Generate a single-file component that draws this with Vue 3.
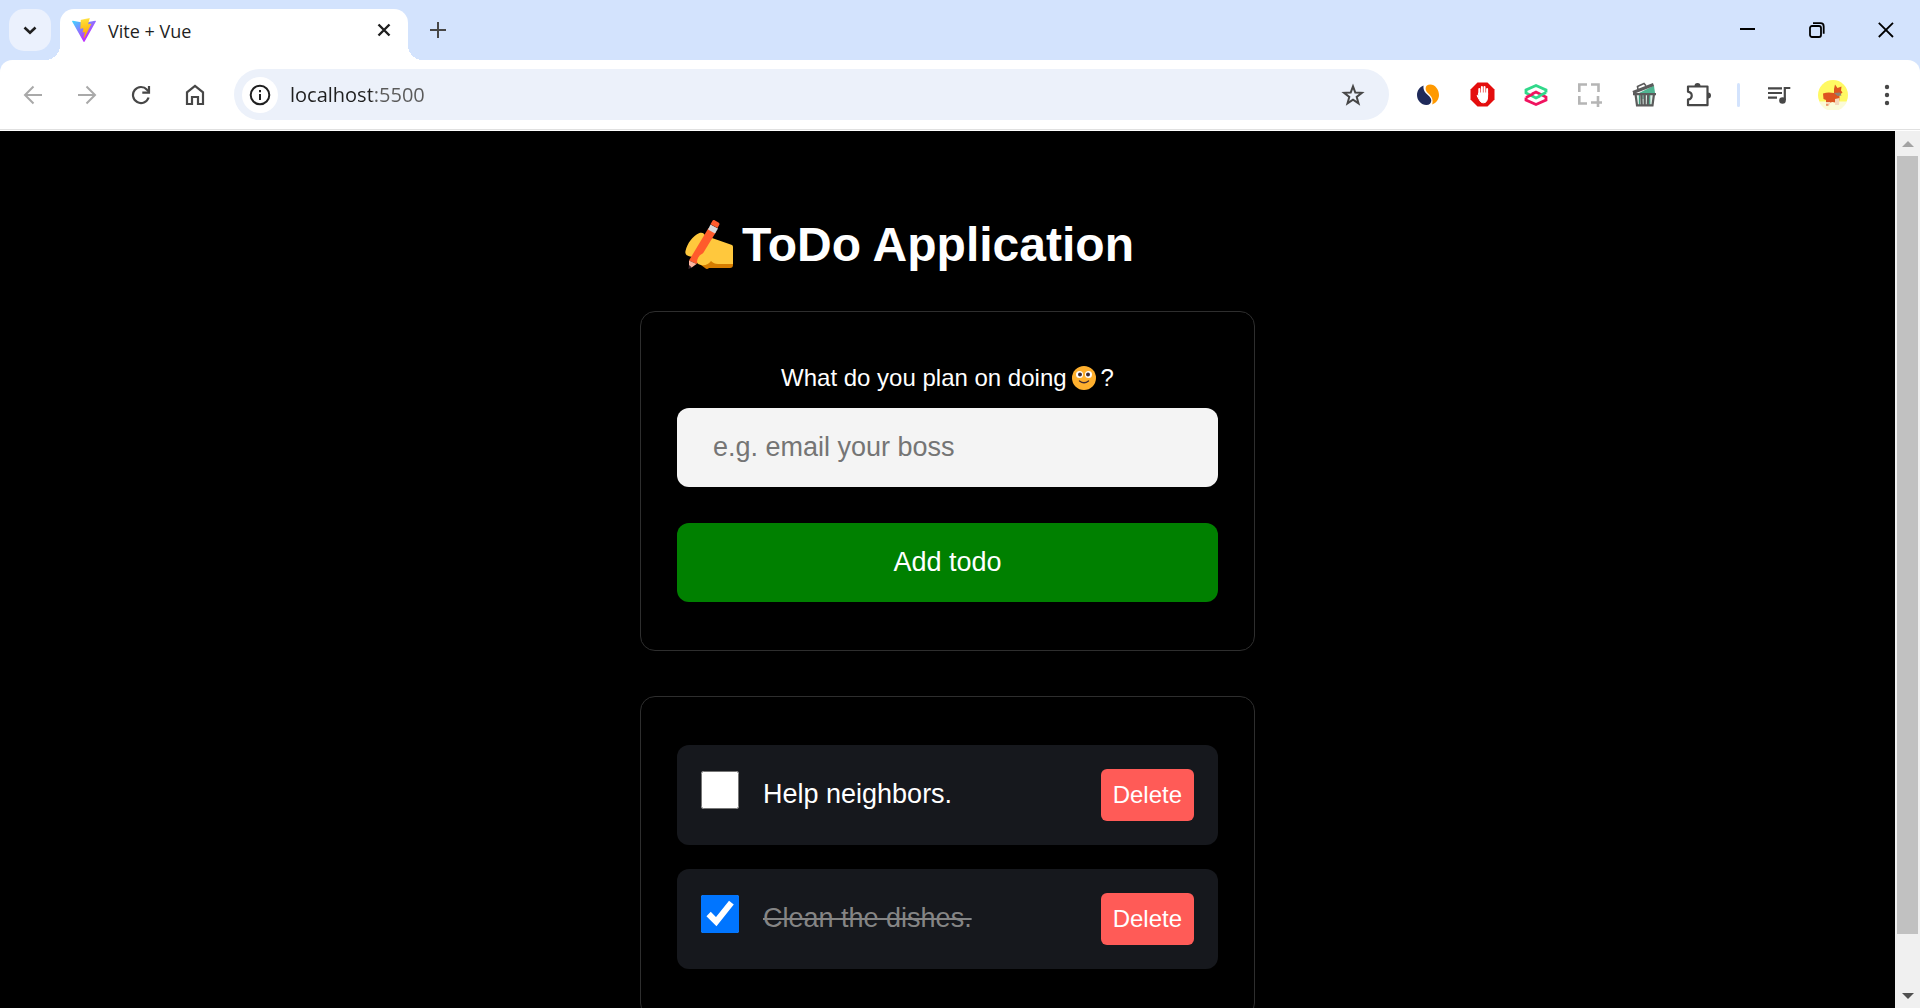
<script setup>
import { ref } from 'vue'

const address = ref('localhost:5500')
const newTodo = ref('')
const todos = ref([
  { id: 1, content: 'Help neighbors.', done: false },
  { id: 2, content: 'Clean the dishes.', done: true },
])

function addTodo() {
  if (!newTodo.value.trim()) return
  todos.value.push({ id: Date.now(), content: newTodo.value, done: false })
  newTodo.value = ''
}

function removeTodo(id) {
  todos.value = todos.value.filter((t) => t.id !== id)
}
</script>

<template>
  <div class="window">
    <header class="tabstrip">
      <button class="tab-search" aria-label="Search tabs">
        <svg width="14" height="14" viewBox="0 0 14 14" fill="none" stroke="#1f1f1f" stroke-width="2.6"><path d="M1.5 4.5 7 9.7l5.500-5.200" /></svg>
      </button>
      <div class="tab">
        <svg width="24" height="24" viewBox="0 0 256 257">
          <defs>
            <linearGradient id="vite-a" x1="-.8%" x2="57.6%" y1="7.7%" y2="78.4%">
              <stop offset="0" stop-color="#41d1ff" />
              <stop offset="1" stop-color="#bd34fe" />
            </linearGradient>
            <linearGradient id="vite-b" x1="43.4%" x2="50.3%" y1="2.2%" y2="89%">
              <stop offset="0" stop-color="#ffea83" />
              <stop offset=".083" stop-color="#ffdd35" />
              <stop offset="1" stop-color="#ffa800" />
            </linearGradient>
          </defs>
          <path fill="url(#vite-a)" d="M255.153 37.938L134.897 252.976c-2.483 4.44-8.862 4.466-11.382.048L.875 37.958c-2.746-4.814 1.371-10.646 6.827-9.67l120.385 21.517a6.537 6.537 0 0 0 2.322-.004l117.867-21.483c5.438-.991 9.574 4.796 6.877 9.62Z" />
          <path fill="url(#vite-b)" d="M185.432.063L96.44 17.501a3.268 3.268 0 0 0-2.634 3.014l-5.474 92.456a3.268 3.268 0 0 0 3.997 3.378l24.777-5.718c2.318-.535 4.413 1.507 3.936 3.838l-7.361 36.047c-.495 2.426 1.782 4.5 4.151 3.78l15.304-4.649c2.372-.72 4.652 1.36 4.15 3.788l-11.698 56.621c-.732 3.542 3.979 5.473 5.943 2.437l1.313-2.028l72.516-144.72c1.215-2.423-.88-5.186-3.54-4.672l-25.505 4.922c-2.396.462-4.435-1.77-3.759-4.114l16.646-57.705c.677-2.35-1.37-4.583-3.769-4.113Z" />
        </svg>
        <span class="tab-title">Vite + Vue</span>
        <button class="tab-close" aria-label="Close tab">
          <svg width="14" height="14" viewBox="0 0 14 14" stroke="#1f1f1f" stroke-width="2.4"><path d="M1.5 1.5l11 11M12.5 1.5l-11 11" /></svg>
        </button>
      </div>
      <button class="new-tab" aria-label="New tab">
        <svg width="16" height="16" viewBox="0 0 16 16" stroke="#474747" stroke-width="2"><path d="M8 0v16M0 8h16" /></svg>
      </button>
      <div class="window-controls">
        <button aria-label="Minimize">
          <svg width="16" height="16" viewBox="0 0 16 16" stroke="#000" stroke-width="2"><path d="M0 7h15" /></svg>
        </button>
        <button aria-label="Restore">
          <svg width="16" height="16" viewBox="0 0 16 16" fill="none" stroke="#000" stroke-width="1.8"><rect x="1" y="4" width="11" height="11" rx="2" /><path d="M4 1.2h7.5a3.2 3.2 0 0 1 3.2 3.2v7.4" /></svg>
        </button>
        <button aria-label="Close window">
          <svg width="16" height="16" viewBox="0 0 16 16" stroke="#000" stroke-width="1.8"><path d="M.8 .8l14.2 14.2M15 .8.8 15" /></svg>
        </button>
      </div>
    </header>

    <nav class="toolbar">
      <button class="tool" aria-label="Back">
        <svg width="20" height="20" viewBox="0 0 20 20" fill="none" stroke="#a9a9a9" stroke-width="2"><path d="M19 10H2.500M10.500 1.500 2 10l8.500 8.500" /></svg>
      </button>
      <button class="tool" aria-label="Forward">
        <svg width="20" height="20" viewBox="0 0 20 20" fill="none" stroke="#a9a9a9" stroke-width="2"><path d="M1 10h16.500M9.500 1.500 18 10l-8.500 8.500" /></svg>
      </button>
      <button class="tool" aria-label="Reload">
        <svg width="20" height="20" viewBox="0 0 20 20" fill="none" stroke="#474747" stroke-width="2.200"><path d="M17.600 12.500A8 8 0 1 1 16 4.700l1.800 1.900" /><path d="M18 1v6.700h-6.700" /></svg>
      </button>
      <button class="tool" aria-label="Home">
        <svg width="20" height="22" viewBox="0 0 20 22" fill="none" stroke="#474747" stroke-width="2.200"><path d="M2 20V8.300L10 2l8 6.300V20h-5v-7H7v7Z" /></svg>
      </button>

      <div class="omnibox">
        <button class="site-info" aria-label="View site information">
          <svg width="22" height="22" viewBox="0 0 22 22" fill="none" stroke="#1f1f1f" stroke-width="2"><circle cx="11" cy="11" r="9.300" /><path d="M11 10v6M11 6v2.200" /></svg>
        </button>
        <input v-model="address" class="address" type="text" aria-label="Address" />
        <button class="tool" aria-label="Bookmark this tab">
          <svg width="24" height="24" viewBox="0 0 24 24" fill="none" stroke="#474747" stroke-width="2"><path d="m12 3.300 2.300 6.200 6.600.3-5.200 4.100 1.800 6.400-5.500-3.700-5.500 3.700 1.800-6.400L3.100 9.800l6.600-.3Z" /></svg>
        </button>
      </div>

      <div class="extensions">
        <button class="tool" aria-label="Similarweb">
          <svg width="24" height="24" viewBox="0 0 24 24"><path fill="#1f2a5a" d="M7.500 2.500C3.600 4 1 7.700 1 12c0 5.500 4.400 10 9.300 10 3.300 0 5-2 5-4.500 0-2.200-1.400-3.700-3.500-5.600C9.300 9.700 7 7.300 7.500 2.500Z" /><path fill="#f90" d="M16.200 21.500C20.300 20 23 16.200 23 12c0-5.600-4-10.500-8.700-10.500C11.500 1.500 9.600 3 9.600 5.500c0 2.200 1.300 3.700 3.300 5.600 2.600 2.500 4.600 5.300 3.300 10.400Z" /></svg>
        </button>
        <button class="tool" aria-label="AdBlock">
          <svg width="25" height="25" viewBox="0 0 25 25"><path fill="#e40d0d" d="M7.500.5h10l7 7v10l-7 7h-10l-7-7v-10Z" /><g stroke="#fff" stroke-width="2" stroke-linecap="round" fill="#fff"><path d="M9.300 12V7M11.900 12V5M14.500 12V5M17.100 13V7" /><path stroke-width="1" d="M8.800 11h8.800v4c0 3.500-1.500 5.800-4 5.800-2.300 0-3.700-1.300-4.400-3.300L7 13.600c.7-.6 1.300-.3 1.800.8Z" /></g></svg>
        </button>
        <button class="tool" aria-label="Requestly">
          <svg width="24" height="24" viewBox="0 0 24 24" fill="none" stroke-width="2.800"><path stroke="#31d88a" d="M22 9.500V7L12 2.500 2 7v3l10 5 4-2" /><path stroke="#f0135f" d="M2 14.500V17l10 4.500L22 17v-3L12 9l-4 2" /><path stroke="#31d88a" d="m22 9.500-7 3.500" /><path stroke="#f0135f" d="m2 14.500 7-3.500" /></svg>
        </button>
        <button class="tool" aria-label="Capture area">
          <svg width="24" height="24" viewBox="0 0 24 24" fill="none" stroke="#b5b5b5" stroke-width="2.600"><path d="M1.300 9V1.500H9M13 1.500h7.500V9M1.300 13v7.500H9M20 13v11M13 19.500h11" /></svg>
        </button>
        <button class="tool" aria-label="Clear cache">
          <svg width="25" height="25" viewBox="0 0 25 25"><path fill="#4fb592" d="M7 11 22 3.500 23 11Z" /><path fill="#dff0e9" d="M4 12h18l-1.500 12h-15Z" /><path fill="none" stroke="#3e9e7e" stroke-width="1.200" d="M7.500 13v10M17.700 13v10M11 13v4" /><path fill="none" stroke="#5b5b5b" stroke-width="3.200" d="M1 10.500 21.500 2.500" /><path fill="none" stroke="#5b5b5b" stroke-width="1.600" d="M6 7.500 5.500 4.500 12 1.500l2 2.200" /><path fill="none" stroke="#5b5b5b" stroke-width="2.200" d="M1 12.200h23M3.500 12 5 23.300h15.500L22 12M9.300 12l.4 11M16.200 12l-.4 11M12.700 12v11" /></svg>
        </button>
        <button class="tool" aria-label="Extensions">
          <svg width="26" height="26" viewBox="0 0 26 26"><path fill="none" stroke="#474747" stroke-width="2.200" stroke-linejoin="round" d="M3 4.500h19.500v18.700H3v-5.500c5-1 5-7 0-8Z" /><path fill="#474747" d="M9.500 4a3 3 0 0 1 6 0ZM23 10.500a3 3 0 0 1 0 6Z" /></svg>
        </button>
      </div>
      <div class="divider"></div>
      <button class="tool" aria-label="Media controls">
        <svg width="24" height="20" viewBox="0 0 24 20" fill="none" stroke="#474747" stroke-width="2.200"><path d="M1 3.300h14M1 8h14M1 12.700h9M17.800 15V3h5.500" /><circle cx="15.500" cy="15.500" r="3.300" fill="#474747" stroke="none" /></svg>
      </button>
      <button class="tool" aria-label="Profile">
        <svg width="30" height="30" viewBox="0 0 30 30"><circle cx="15" cy="15" r="15" fill="#fff963" /><path fill="#fbfbd8" d="M1 21.500h28a15 15 0 0 1-28 0Z" /><path fill="#dd5420" d="M5 13.500c4-1.500 8-1 11-.5V9l1-4.500 2.500 3.500 4-1.500-.5 4 1.500 2-3 2.500v5l-2 3-5-1-4 1v2.500H8V20l-2.500-1Z" /><path fill="#f4d8bb" d="m17 19 4.500-1-.5 7h-4ZM8 22h4v2.500H8Z" /><path fill="#8d8176" d="m16 13 6-.500 1.500 3-4 .5Z" /></svg>
      </button>
      <button class="tool" aria-label="Menu">
        <svg width="6" height="22" viewBox="0 0 6 22" fill="#474747"><circle cx="3" cy="3" r="2.200" /><circle cx="3" cy="11" r="2.200" /><circle cx="3" cy="19" r="2.200" /></svg>
      </button>
    </nav>

    <div class="viewport">
      <main class="page">
        <div class="content">
          <h1>
            <svg class="hand" width="50" height="50" viewBox="0 0 50 50">
              <path fill="#d67c00" d="M13 34h36v11q0 3-3 3H25q-2 2-4 0l-4-3Z" />
              <path fill="#ffc83d" d="M1.500 31c2-8 7-15 14-18 4-1 7 2 5 6l-7 13c-2 4-5 6-9 4-3-1-3.500-3-3-5Z" />
              <path fill="#ffc83d" d="M28 18 48 25q1 .5 1 2v17H34c-3 0-5-1-7-3-3 4-7 5-10 4-5-1-7-5-4-9Z" />
              <path fill="#ff5b2b" d="m24.500 8 7.500 4L12.500 44 5 40.500Z" />
              <path fill="#d9d9d9" d="m26.500 4.500 7.500 4-3 5-7-4Z" />
              <path fill="#ff5b2b" d="m28.500.8c.5-1 1.500-.8 2.500-.3l3.500 2c1 .6 1.200 1.300.8 2.200L33.500 8l-7-3.800Z" />
              <path fill="#ffb7a0" d="m5 40.500 7.500 3.500-5.500 4-2-1.500Z" />
              <path fill="#402a32" d="m5 45 3 2.500-3.500 1.500Z" />
              <path fill="#ffc83d" d="M20 33c-4 1-7 5-7 9l5 3c4 0 8-3 9-6Z" />
            </svg>
            <span>ToDo Application</span>
          </h1>

          <form class="card" @submit.prevent="addTodo">
            <label class="question" for="todo-input">
              <span>What do you plan on doing</span>
              <svg class="face" width="26" height="24" viewBox="0 0 26 24">
                <circle cx="13" cy="12" r="12" fill="#ffb02e" />
                <circle cx="8.500" cy="8.500" r="3.500" fill="#fff" />
                <circle cx="17.500" cy="8.500" r="3.500" fill="#fff" />
                <circle cx="9" cy="8.500" r="2" fill="#402a32" />
                <circle cx="17" cy="8.500" r="2" fill="#402a32" />
                <path d="M8.500 15q4.500 3.500 9 0" fill="none" stroke="#402a32" stroke-width="1.400" stroke-linecap="round" />
              </svg>
              <span>?</span>
            </label>
            <input id="todo-input" v-model="newTodo" class="field" type="text" placeholder="e.g. email your boss" />
            <button class="add" type="submit">Add todo</button>
          </form>

          <section class="card list">
            <div v-for="todo in todos" :key="todo.id" class="todo">
              <input :id="`todo-${todo.id}`" v-model="todo.done" type="checkbox" />
              <label :for="`todo-${todo.id}`" :class="{ done: todo.done }">{{ todo.content }}</label>
              <button class="delete" type="button" @click="removeTodo(todo.id)">Delete</button>
            </div>
          </section>
        </div>
      </main>
      <div class="scrollbar">
        <svg width="12" height="6" viewBox="0 0 12 6" fill="#a3a3a3"><path d="M6 0l6 6H0Z" /></svg>
        <div class="track"><div class="thumb"></div></div>
        <svg width="12" height="6" viewBox="0 0 12 6" fill="#505050"><path d="M0 0h12L6 6Z" /></svg>
      </div>
    </div>
  </div>
</template>

<style>
body {
  background: #000;
}
</style>

<style scoped>
* {
  box-sizing: border-box;
}

button {
  display: flex;
  align-items: center;
  justify-content: center;
  padding: 0;
  border: 0;
  background: none;
  font-family: inherit;
  cursor: pointer;
}

svg {
  flex: none;
}

.window {
  display: flex;
  flex-direction: column;
  height: 100vh;
  overflow: hidden;
  background: #d3e3fd;
  font-family: "Liberation Sans", Arial, sans-serif;
}

.tabstrip {
  display: flex;
  flex: none;
  height: 60px;
  padding: 9px 0 0 9px;
}

.tab-search {
  width: 42px;
  height: 42px;
  margin-right: 9px;
  border-radius: 15px;
  background: #ebf1fd;
}

.tab {
  position: relative;
  display: flex;
  align-items: center;
  gap: 12px;
  width: 348px;
  padding: 0 12px 9px;
  border-radius: 14px 14px 0 0;
  background: #fff;
}

.tab::before,
.tab::after {
  content: "";
  position: absolute;
  bottom: 0;
  width: 15px;
  height: 15px;
}

.tab::before {
  right: 100%;
  background: radial-gradient(circle at 0 0, transparent 15px, #fff 15px);
}

.tab::after {
  left: 100%;
  background: radial-gradient(circle at 100% 0, transparent 15px, #fff 15px);
}

.tab-title {
  flex: 1;
  padding-top: 2px;
  color: #1f1f1f;
  font: 18px/24px "Open Sans", "Noto Sans", sans-serif;
}

.tab-close {
  width: 24px;
  height: 24px;
}

.new-tab {
  width: 42px;
  height: 42px;
  margin-left: 9px;
}

.window-controls {
  display: flex;
  margin-left: auto;
}

.window-controls button {
  width: 69px;
  height: 42px;
}

.toolbar {
  display: flex;
  flex: none;
  align-items: center;
  height: 71px;
  padding: 0 6px 2px;
  border-radius: 12px 12px 0 0;
  background: linear-gradient(#e0e0e0, #e0e0e0) 0 69px / 100% 1px no-repeat #fff;
}

.tool {
  flex: none;
  width: 54px;
  height: 42px;
}

.omnibox {
  display: flex;
  flex: 1;
  align-items: center;
  height: 51px;
  margin: 0 12px;
  padding: 0 9px 0 8px;
  border-radius: 26px;
  background: #ecf1fa;
}

.site-info {
  flex: none;
  width: 36px;
  height: 36px;
  border-radius: 50%;
  background: #fff;
}

.address {
  flex: 1;
  min-width: 0;
  margin-left: 12px;
  padding: 0;
  border: 0;
  outline: 0;
  background: linear-gradient(90deg, #1f1f1f 82px, #5a5a5a 82px) text;
  color: transparent;
  font: 20px/30px "Open Sans", "Noto Sans", sans-serif;
}

.extensions {
  display: flex;
}

.divider {
  flex: none;
  width: 3px;
  height: 24px;
  margin: 0 12px;
  border-radius: 2px;
  background: #d3e3fd;
}

.viewport {
  display: flex;
  flex: 1;
  min-height: 0;
  background: #000;
}

.page {
  flex: 1;
  overflow: hidden;
  color: #fff;
}

.content {
  width: 615px;
  margin: 0 auto;
  padding: 84px 0;
}

h1 {
  display: flex;
  align-items: center;
  gap: 8px;
  margin: 0 0 36px;
  padding-left: 44px;
  font-size: 48px;
  line-height: 60px;
}

.card {
  display: flex;
  flex-direction: column;
  padding: 48px 36px;
  border: 1px solid #2e2e2e;
  border-radius: 15px;
}

.question {
  display: flex;
  align-items: center;
  justify-content: center;
  gap: 4px;
  margin-bottom: 12px;
  font-size: 24px;
  line-height: 36px;
}

.field {
  width: 100%;
  height: 79px;
  padding: 0 36px;
  border: 0;
  border-radius: 12px;
  background: #f4f4f4;
  color: #222;
  font: 27px "Liberation Sans", Arial, sans-serif;
}

.field::placeholder {
  color: #757575;
}

.add {
  height: 79px;
  margin-top: 36px;
  border-radius: 12px;
  background: #008000;
  color: #fff;
  font-size: 27px;
}

.list {
  gap: 24px;
  margin-top: 45px;
}

.todo {
  display: flex;
  align-items: flex-start;
  gap: 24px;
  padding: 24px;
  border-radius: 12px;
  background: #16181d;
}

.todo input {
  flex: none;
  width: 38px;
  height: 38px;
  margin: 2px 0 0;
  accent-color: #0075ff;
}

.todo label {
  flex: 1;
  font-size: 27px;
  line-height: 50px;
}

.todo .done {
  color: #858585;
  text-decoration: line-through;
}

.delete {
  height: 52px;
  padding: 0 12px;
  border-radius: 6px;
  background: #ff5b57;
  color: #fff;
  font-size: 24px;
}

.scrollbar {
  display: flex;
  flex: none;
  flex-direction: column;
  align-items: center;
  width: 25px;
  padding: 10px 0 9px;
  background: #f0f0f0;
}

.track {
  flex: 1;
  width: 21px;
  margin: 9px 0;
}

.thumb {
  height: 94%;
  background: #c1c1c1;
}
</style>
